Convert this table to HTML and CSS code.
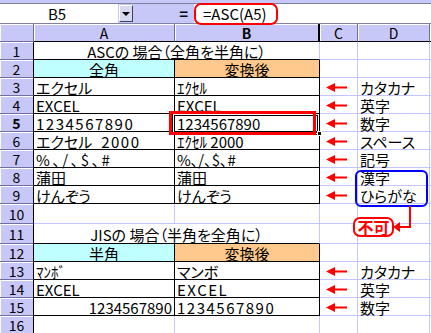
FILE: index.html
```html
<!DOCTYPE html>
<html>
<head>
    <meta charset="UTF-8">
    <title>ASC / JIS</title>
    <link rel="stylesheet" href="styles.css">
</head>
<body>
    <div class="sheet">
        <div class="top-strip"></div>

        <div class="formula-bar">
            <div class="name-box">B5</div>
            <div class="name-drop"><span class="tri"></span></div>
            <div class="eq">=</div>
            <div class="formula">=ASC(A5)</div>
        </div>

        <div class="grid">
            <!-- column headers -->
            <div class="corner"></div>
            <div class="ch">A</div>
            <div class="ch cur">B</div>
            <div class="ch">C</div>
            <div class="ch">D</div>
            <div class="ch"></div>

            <!-- 1 -->
            <div class="rh">1</div>
            <div class="c title">ASCの 場合（全角を半角に）</div>
            <div class="c"></div><div class="c"></div><div class="c"></div>

            <!-- 2 -->
            <div class="rh">2</div>
            <div class="c tb mid zen">全角</div>
            <div class="c tb mid han">変換後</div>
            <div class="c"></div><div class="c"></div><div class="c"></div>

            <!-- 3 -->
            <div class="rh">3</div>
            <div class="c tb">エクセル</div>
            <div class="c tb">ｴｸｾﾙ</div>
            <div class="c arw"><svg width="22" height="9" viewBox="0 0 22 9"><polygon points="0,4.5 9,0 9,9" fill="#f00"/><rect x="9" y="3.5" width="12" height="2" fill="#f00"/></svg></div>
            <div class="c">カタカナ</div><div class="c"></div>

            <!-- 4 -->
            <div class="rh">4</div>
            <div class="c tb fw">ＥＸＣＥＬ</div>
            <div class="c tb">EXCEL</div>
            <div class="c arw"><svg width="22" height="9" viewBox="0 0 22 9"><polygon points="0,4.5 9,0 9,9" fill="#f00"/><rect x="9" y="3.5" width="12" height="2" fill="#f00"/></svg></div>
            <div class="c">英字</div><div class="c"></div>

            <!-- 5 -->
            <div class="rh cur">5</div>
            <div class="c tb fw wide">１２３４５６７８９０</div>
            <div class="c tb">1234567890</div>
            <div class="c arw"><svg width="22" height="9" viewBox="0 0 22 9"><polygon points="0,4.5 9,0 9,9" fill="#f00"/><rect x="9" y="3.5" width="12" height="2" fill="#f00"/></svg></div>
            <div class="c">数字</div><div class="c"></div>

            <!-- 6 -->
            <div class="rh">6</div>
            <div class="c tb fw">エクセル<span class="gap">　</span><span class="wide">２０００</span></div>
            <div class="c tb">ｴｸｾﾙ 2000</div>
            <div class="c arw"><svg width="22" height="9" viewBox="0 0 22 9"><polygon points="0,4.5 9,0 9,9" fill="#f00"/><rect x="9" y="3.5" width="12" height="2" fill="#f00"/></svg></div>
            <div class="c">スペース</div><div class="c"></div>

            <!-- 7 -->
            <div class="rh">7</div>
            <div class="c tb fw sym">％、／、＄、＃</div>
            <div class="c tb">%､/､$､#</div>
            <div class="c arw"><svg width="22" height="9" viewBox="0 0 22 9"><polygon points="0,4.5 9,0 9,9" fill="#f00"/><rect x="9" y="3.5" width="12" height="2" fill="#f00"/></svg></div>
            <div class="c">記号</div><div class="c"></div>

            <!-- 8 -->
            <div class="rh">8</div>
            <div class="c tb">蒲田</div>
            <div class="c tb">蒲田</div>
            <div class="c arw"><svg width="22" height="9" viewBox="0 0 22 9"><polygon points="0,4.5 9,0 9,9" fill="#f00"/><rect x="9" y="3.5" width="12" height="2" fill="#f00"/></svg></div>
            <div class="c">漢字</div><div class="c"></div>

            <!-- 9 -->
            <div class="rh">9</div>
            <div class="c tb">けんぞう</div>
            <div class="c tb">けんぞう</div>
            <div class="c arw"><svg width="22" height="9" viewBox="0 0 22 9"><polygon points="0,4.5 9,0 9,9" fill="#f00"/><rect x="9" y="3.5" width="12" height="2" fill="#f00"/></svg></div>
            <div class="c">ひらがな</div><div class="c"></div>

            <!-- 10 -->
            <div class="rh">10</div>
            <div class="c"></div><div class="c"></div><div class="c"></div><div class="c"></div><div class="c"></div>

            <!-- 11 -->
            <div class="rh">11</div>
            <div class="c title">JISの 場合（半角を全角に）</div>
            <div class="c"></div><div class="c"></div><div class="c"></div>

            <!-- 12 -->
            <div class="rh">12</div>
            <div class="c tb mid zen">半角</div>
            <div class="c tb mid han">変換後</div>
            <div class="c"></div><div class="c"></div><div class="c"></div>

            <!-- 13 -->
            <div class="rh">13</div>
            <div class="c tb">ﾏﾝﾎﾞ</div>
            <div class="c tb">マンボ</div>
            <div class="c arw"><svg width="22" height="9" viewBox="0 0 22 9"><polygon points="0,4.5 9,0 9,9" fill="#f00"/><rect x="9" y="3.5" width="12" height="2" fill="#f00"/></svg></div>
            <div class="c">カタカナ</div><div class="c"></div>

            <!-- 14 -->
            <div class="rh">14</div>
            <div class="c tb">EXCEL</div>
            <div class="c tb fw wide">ＥＸＣＥＬ</div>
            <div class="c arw"><svg width="22" height="9" viewBox="0 0 22 9"><polygon points="0,4.5 9,0 9,9" fill="#f00"/><rect x="9" y="3.5" width="12" height="2" fill="#f00"/></svg></div>
            <div class="c">英字</div><div class="c"></div>

            <!-- 15 -->
            <div class="rh">15</div>
            <div class="c tb num">1234567890</div>
            <div class="c tb fw wide">１２３４５６７８９０</div>
            <div class="c arw"><svg width="22" height="9" viewBox="0 0 22 9"><polygon points="0,4.5 9,0 9,9" fill="#f00"/><rect x="9" y="3.5" width="12" height="2" fill="#f00"/></svg></div>
            <div class="c">数字</div><div class="c"></div>

            <!-- 16 -->
            <div class="rh">16</div>
            <div class="c"></div><div class="c"></div><div class="c"></div><div class="c"></div><div class="c"></div>
        </div>

        <!-- active cell + notes drawn over the grid -->
        <div class="sel-box"></div>
        <div class="fill-handle"></div>
        <div class="red-box"></div>
        <div class="note-box"></div>
        <div class="ng-box">不可</div>
        <svg class="ng-link" width="22" height="30" viewBox="0 0 22 30">
            <polyline points="17,0 17,21 6,21" fill="none" stroke="#f00" stroke-width="2"/>
            <polygon points="0,21 7,16 7,26" fill="#f00"/>
        </svg>
    </div>
</body>
</html>
```

FILE: styles.css
```css
body {
    margin: 0;
    background: #fff;
    font-family: "Noto Sans CJK JP", sans-serif;
    font-size: 15px;
    font-feature-settings: "palt";
    color: #000;
}
.sheet {
    position: relative;
    width: 431px;
    height: 333px;
    overflow: hidden;
}
.top-strip {
    height: 4px;
    background: #c8c8f8;
    box-sizing: border-box;
    border-bottom: 1px solid #8080a0;
}
.formula-bar {
    display: flex;
    height: 20px;
    box-sizing: border-box;
    border-bottom: 1px solid #8080a0;
    background: #c8c8f8;
}
.name-box {
    width: 118px;
    background: #fff;
    display: flex;
    align-items: center;
    justify-content: center;
    font-size: 15px;
    line-height: 17px;
    padding-right: 4px;
    box-sizing: border-box;
}
.name-drop {
    width: 14px;
    margin: 1px;
    box-sizing: border-box;
    background: #d8d8f0;
    border: 1px solid #404060;
    border-top-color: #fff;
    border-left-color: #fff;
    display: flex;
    align-items: center;
    justify-content: center;
}
.tri {
    width: 0;
    height: 0;
    border-left: 4px solid transparent;
    border-right: 4px solid transparent;
    border-top: 4px solid #000;
}
.eq {
    width: 60px;
    text-align: right;
    padding-right: 6px;
    box-sizing: border-box;
    font-weight: bold;
    line-height: 19px;
}
.formula {
    position: relative;
    flex: 1;
    background: #fff;
    padding-left: 9px;
    line-height: 19px;
}
/* red ring round the formula text */
.formula::before {
    content: "";
    position: absolute;
    left: 0;
    top: -1px;
    width: 84px;
    height: 22px;
    box-sizing: border-box;
    border: 2px solid #f00;
    border-radius: 7px;
}
.grid {
    display: grid;
    grid-template-columns: 34px 141px 145px 38px 72px 1fr;
    grid-template-rows: repeat(10, 18px) 20px 20px repeat(5, 18px);
    line-height: 17px;
}
.grid > div {
    box-sizing: border-box;
    border-right: 1px solid #c4c4ff;
    border-bottom: 1px solid #c4c4ff;
    display: flex;
    align-items: center;
    padding: 1px 2px 0;
    white-space: nowrap;
}
.grid > .corner,
.grid > .ch,
.grid > .rh {
    background: #c8c8f8;
    border-right-color: #7070a0;
    border-bottom-color: #7070a0;
    box-shadow: inset 1px 1px 0 #fff;
    justify-content: center;
    font-size: 14px;
}
.grid > .rh {
    border-right-color: #000;
}
.grid > .ch {
    border-bottom-color: #000;
}
.grid > .ch.cur {
    font-weight: bold;
    border-right: 2px solid #000;
}
.grid > .rh.cur {
    font-weight: bold;
}
.grid > .title {
    grid-column: span 2;
    justify-content: center;
    border-bottom-color: #000;
}
.grid > .tb {
    border-right-color: #000;
    border-bottom-color: #000;
}
.grid > .mid {
    justify-content: center;
}
.grid > .num {
    justify-content: flex-end;
}
/* proportional widths for full-width letters and digits */
.fw {
    font-feature-settings: "palt", "pwid";
}
.wide {
    letter-spacing: 1.5px;
}
.sym {
    letter-spacing: 2.5px;
}
.gap {
    letter-spacing: -6px;
}
.zen {
    background: #c0ffff;
}
.han {
    background: #ffc88c;
}
.grid > .arw {
    padding-left: 6px;
}
.sel-box {
    position: absolute;
    left: 172px;
    top: 113px;
    width: 148px;
    height: 22px;
    box-sizing: border-box;
    border: 1px solid #000;
    box-shadow: inset 0 0 0 1px #fff, inset 0 0 0 2px #000;
}
.fill-handle {
    position: absolute;
    left: 317px;
    top: 131px;
    width: 5px;
    height: 5px;
    background: #000;
    border: 1px solid #fff;
    box-sizing: border-box;
}
.red-box {
    position: absolute;
    left: 169px;
    top: 111px;
    width: 147px;
    height: 24px;
    box-sizing: border-box;
    border: 3px solid #f00;
}
.note-box {
    position: absolute;
    left: 355px;
    top: 170px;
    width: 73px;
    height: 37px;
    box-sizing: border-box;
    border: 2px solid #00f;
    border-radius: 6px;
}
.ng-box {
    position: absolute;
    left: 353px;
    top: 217px;
    width: 41px;
    height: 20px;
    box-sizing: border-box;
    border: 2px solid #f00;
    border-radius: 7px;
    background: #fff;
    color: #f00;
    font-size: 16px;
    font-weight: bold;
    line-height: 16px;
    text-align: center;
}
.ng-link {
    position: absolute;
    left: 393px;
    top: 206px;
}
```
